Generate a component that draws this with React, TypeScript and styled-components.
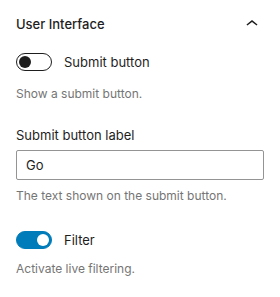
import React, { useState } from 'react'
import styled, { createGlobalStyle } from 'styled-components'

const GlobalStyle = createGlobalStyle`
  body {
    margin: 0;
    background: #fff;
    font-family: Inter, "Noto Sans", sans-serif;
    -webkit-font-smoothing: antialiased;
  }
`

const ChevronUp = () => (
  <svg width="24" height="24" viewBox="0 0 24 24" aria-hidden="true">
    <path d="M6.5 12.4L12 8l5.5 4.4-.9 1.2L12 10l-4.6 3.6-1-1.2z" fill="#1e1e1e" />
  </svg>
)

type ToggleProps = {
  checked: boolean
  label: string
  help: string
  helpGap: number
  onChange: () => void
}

const Toggle = ({ checked, label, help, helpGap, onChange }: ToggleProps) => (
  <Control>
    <ToggleRow onClick={onChange}>
      <Track $on={checked}>
        <Thumb $on={checked} />
      </Track>
      <Label>{label}</Label>
    </ToggleRow>
    <Help $gap={helpGap}>{help}</Help>
  </Control>
)

export default function App() {
  const [submit, setSubmit] = useState(false)
  const [filter, setFilter] = useState(true)
  const [text, setText] = useState('Go')

  return (
    <>
      <GlobalStyle />
      <Panel>
        <Header>
          <Title>User Interface</Title>
          <ChevronUp />
        </Header>
        <Body>
          <Toggle
            checked={submit}
            label="Submit button"
            help="Show a submit button."
            helpGap={15}
            onChange={() => setSubmit(!submit)}
          />
          <Control $space={27}>
            <FieldLabel htmlFor="submit-label">Submit button label</FieldLabel>
            <Input id="submit-label" value={text} onChange={e => setText(e.target.value)} />
            <Help $gap={8}>The text shown on the submit button.</Help>
          </Control>
          <Toggle
            checked={filter}
            label="Filter"
            help="Activate live filtering."
            helpGap={12}
            onChange={() => setFilter(!filter)}
          />
        </Body>
      </Panel>
    </>
  )
}

const Panel = styled.div`
  width: 280px;
  padding: 0 16px;
  box-sizing: border-box;
  color: #1e1e1e;
`

const Header = styled.div`
  display: flex;
  align-items: center;
  justify-content: space-between;
  height: 48px;
`

const Title = styled.div`
  font-size: 13px;
  font-weight: 500;
`

const Body = styled.div`
  display: flex;
  flex-direction: column;
  padding-top: 5px;
`

const Control = styled.div<{ $space?: number }>`
  display: flex;
  flex-direction: column;
  margin-bottom: ${p => p.$space ?? 24}px;
`

const ToggleRow = styled.div`
  display: flex;
  align-items: center;
  gap: 12px;
  height: 18px;
  cursor: pointer;
`

const Track = styled.span<{ $on: boolean }>`
  position: relative;
  width: 36px;
  height: 18px;
  box-sizing: border-box;
  border-radius: 9px;
  border: 1px solid ${p => (p.$on ? '#007cba' : '#1e1e1e')};
  background: ${p => (p.$on ? '#007cba' : '#fff')};
  flex-shrink: 0;
`

const Thumb = styled.span<{ $on: boolean }>`
  position: absolute;
  top: 2px;
  left: ${p => (p.$on ? '20px' : '2px')};
  width: 12px;
  height: 12px;
  border-radius: 50%;
  background: ${p => (p.$on ? '#fff' : '#1e1e1e')};
`

const Label = styled.span`
  font-size: 13px;
`

const FieldLabel = styled.label`
  font-size: 13px;
  line-height: 18px;
  margin-bottom: 6px;
`

const Input = styled.input`
  height: 30px;
  box-sizing: border-box;
  width: 100%;
  border: 1px solid #949494;
  border-radius: 2px;
  padding: 0 9px;
  font-family: inherit;
  font-size: 13px;
  color: #1e1e1e;
  outline: none;
`

const Help = styled.p<{ $gap: number }>`
  margin: ${p => p.$gap}px 0 0;
  font-size: 12px;
  line-height: 16px;
  color: #757575;
`
